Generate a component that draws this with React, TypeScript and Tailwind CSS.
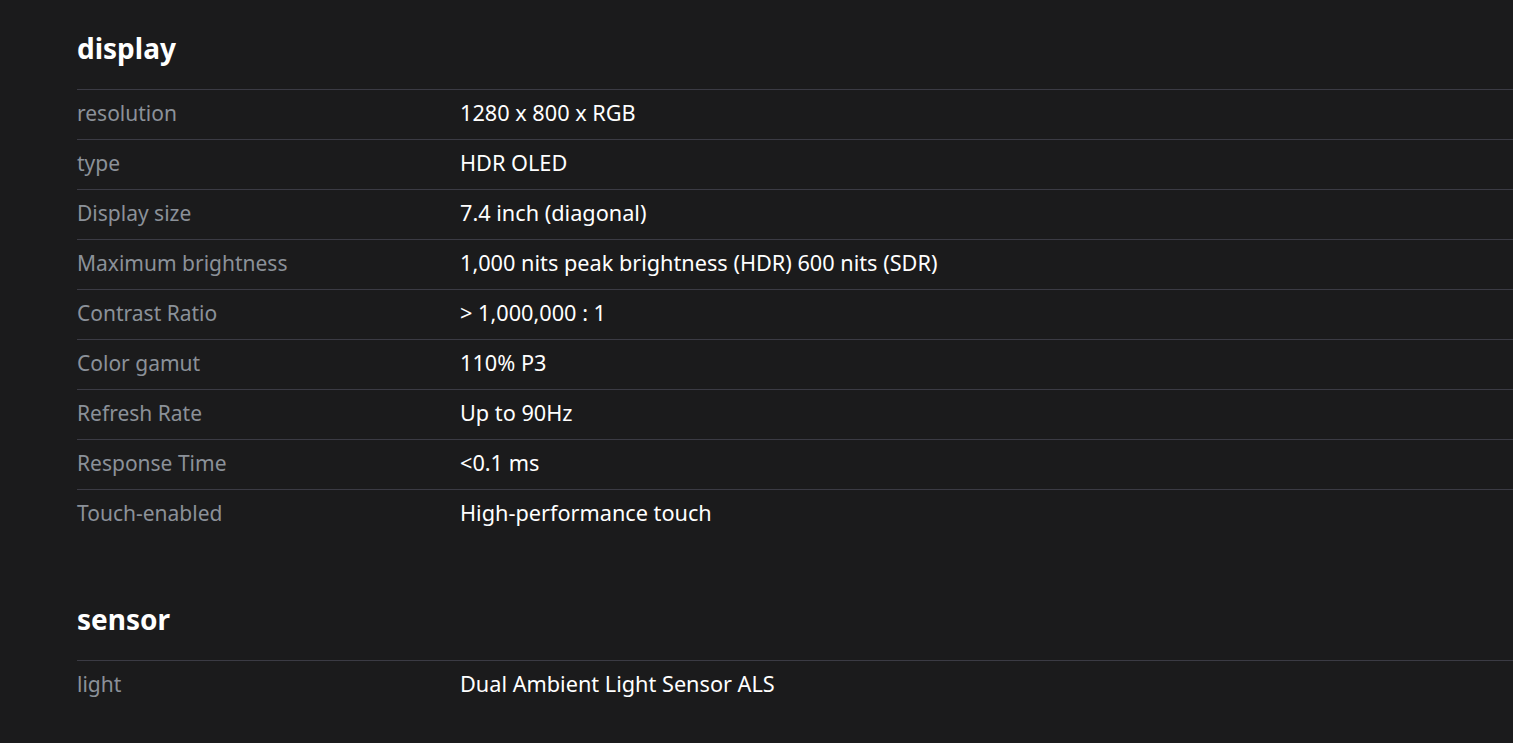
const sections = [
  {
    title: 'display',
    rows: [
      ['resolution', '1280 x 800 x RGB'],
      ['type', 'HDR OLED'],
      ['Display size', '7.4 inch (diagonal)'],
      ['Maximum brightness', '1,000 nits peak brightness (HDR) 600 nits (SDR)'],
      ['Contrast Ratio', '> 1,000,000 : 1'],
      ['Color gamut', '110% P3'],
      ['Refresh Rate', 'Up to 90Hz'],
      ['Response Time', '<0.1 ms'],
      ['Touch-enabled', 'High-performance touch'],
    ],
  },
  {
    title: 'sensor',
    rows: [['light', 'Dual Ambient Light Sensor ALS']],
  },
];

const SpecSection = ({ title, rows }: { title: string; rows: string[][] }) => (
  <section className="mb-[32px]">
    <h2 className="pt-[30px] pb-[23px] text-[28px] leading-[36px] font-bold text-white">
      {title}
    </h2>
    {rows.map(([label, value]) => (
      <div
        key={label}
        className="flex h-[50px] items-center border-t border-[#3b3b44] pb-[2px]"
      >
        <div className="w-[383px] shrink-0 text-[21px] text-[#8b9199]">{label}</div>
        <div className="text-[21.7px] text-white">{value}</div>
      </div>
    ))}
  </section>
);

export default function App() {
  return (
    <div
      className="min-h-[743px] bg-[#1b1b1c] pl-[77px]"
      style={{ fontFamily: '"Noto Sans", "Open Sans", sans-serif' }}
    >
      {sections.map((s) => (
        <SpecSection key={s.title} title={s.title} rows={s.rows} />
      ))}
    </div>
  );
}
